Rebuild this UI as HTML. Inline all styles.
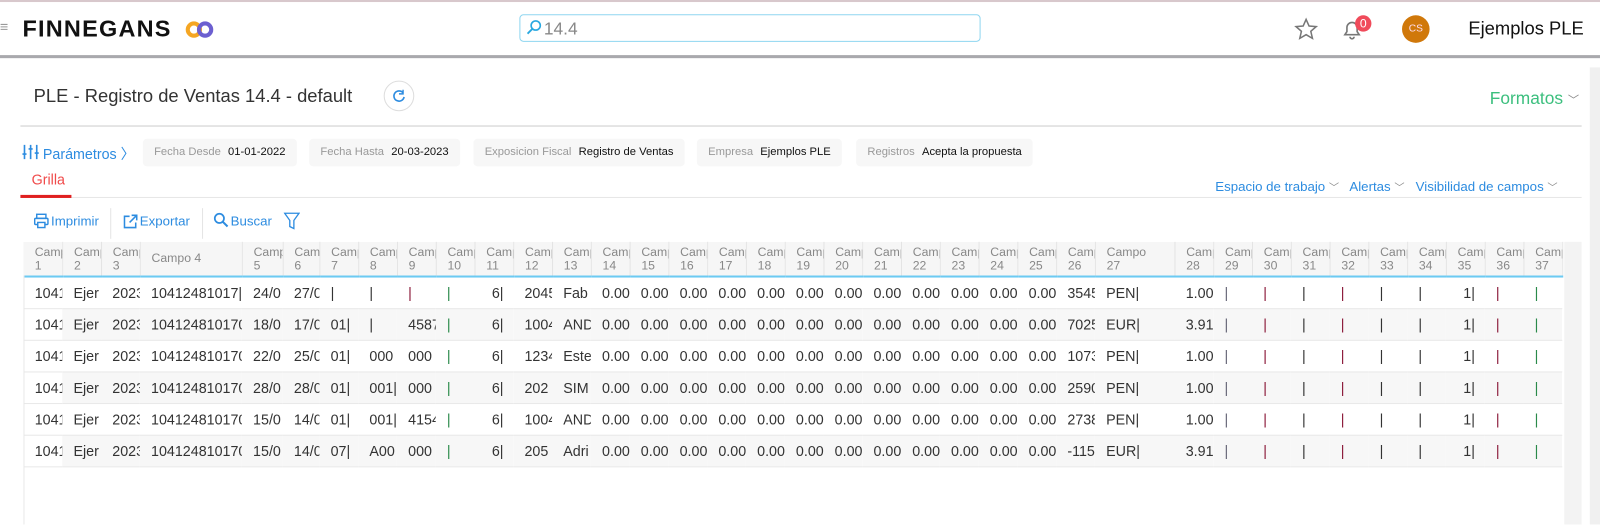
<!DOCTYPE html>
<html><head><meta charset="utf-8"><style>
*{box-sizing:border-box;margin:0;padding:0}
body{width:1600px;height:514px;overflow:hidden;background:#fff;font-family:"Liberation Sans",sans-serif;color:#333}
#w{position:absolute;left:0;top:0;width:1568px;height:504px;transform:scale(1.0204);transform-origin:0 0}
.a{position:absolute;white-space:nowrap}
.top{position:absolute;left:0;top:0;width:1568px;height:57px;border-top:2px solid #d8c8cc;border-bottom:3px solid #a9a9ad;background:#fff}
.chip{position:absolute;top:136px;height:27px;background:#f7f7f7;border-radius:4px;font-size:11px;line-height:27px;padding:0 11px;color:#999}
.chip b{font-weight:normal;color:#111;margin-left:4px}
table{position:absolute;left:23px;top:237px;border-collapse:collapse;table-layout:fixed;width:1508px;font-size:14px}
td,th{overflow:hidden;white-space:nowrap;padding-left:11px}
th{height:34px;background:#f6f6f6;font-weight:normal;color:#888;font-size:12px;text-align:left;line-height:13px;border-right:1px solid #e4e4e4;border-bottom:2px solid #6ccaf2;vertical-align:middle}
td{height:31px;border-bottom:1px solid #e8e8e8;color:#333}
tr:nth-child(odd) td{background:#f7f7f7}
tr:nth-child(odd) td:first-child{background:#fff}
.r{color:#8b1a3a}.g{color:#2a8a4a}.k{color:#667}
.blue{color:#2d8ce0}
</style></head><body><div id="w">
<div class="top"></div>
<div class="a" style="left:0;top:18px;font-size:14px;color:#999">≡</div>
<div class="a" style="left:22px;top:15px;font-size:23px;font-weight:bold;color:#111;letter-spacing:1.2px">FINNEGANS</div>
<svg class="a" style="left:181px;top:19px" width="30" height="20"><circle cx="9" cy="10" r="6" fill="none" stroke="#f5a623" stroke-width="4"/><circle cx="20" cy="10" r="6" fill="none" stroke="#6c5fd0" stroke-width="4"/></svg>
<div class="a" style="left:509px;top:14px;width:452px;height:27px;border:1px solid #8fd6f0;border-radius:4px"></div>
<svg class="a" style="left:515px;top:19px" width="16" height="16"><circle cx="10" cy="6" r="4.5" fill="none" stroke="#29a8e0" stroke-width="1.6"/><path d="M7 9L2 14" stroke="#29a8e0" stroke-width="1.8"/></svg>
<div class="a" style="left:533px;top:19px;font-size:17px;color:#888">14.4</div>
<svg class="a" style="left:1268px;top:17px" width="24" height="24"><path d="M12 2l2.9 6.5 7 .6-5.3 4.6 1.6 6.9L12 17l-6.2 3.6 1.6-6.9L2.1 9.1l7-.6z" fill="none" stroke="#777" stroke-width="1.5"/></svg>
<svg class="a" style="left:1314px;top:18px" width="22" height="22"><path d="M4 16h14l-2-3V9a5 5 0 0 0-10 0v4z M9 18a2 2 0 0 0 4 0" fill="none" stroke="#777" stroke-width="1.6"/></svg>
<div class="a" style="left:1328px;top:15px;width:16px;height:16px;border-radius:8px;background:#f04a5a;color:#fff;font-size:12px;text-align:center;line-height:16px">0</div>
<div class="a" style="left:1374px;top:15px;width:27px;height:27px;border-radius:14px;background:#d0780a;color:#fde;font-size:10px;text-align:center;line-height:27px">CS</div>
<div class="a" style="left:1439px;top:18px;font-size:18px;color:#111">Ejemplos PLE</div>
<div class="a" style="left:1558px;top:66px;width:10px;height:448px;background:#f0f0f0"></div>
<div class="a" style="left:33px;top:84px;font-size:18px;color:#333">PLE - Registro de Ventas 14.4 - default</div>
<div class="a" style="left:376px;top:79px;width:30px;height:30px;border:1px solid #ddd;border-radius:15px"></div>
<svg class="a" style="left:384px;top:87px" width="14" height="14"><path d="M11 4A5 5 0 1 0 12 8" fill="none" stroke="#2d8ce0" stroke-width="1.6"/><path d="M11 1v4H7" fill="none" stroke="#2d8ce0" stroke-width="1.4"/></svg>
<div class="a" style="left:1460px;top:87px;font-size:17px;color:#3cbf7e">Formatos <span style="font-size:11px;color:#888">﹀</span></div>
<div class="a" style="left:20px;top:123px;width:1530px;height:1px;background:#ccc"></div>
<svg class="a" style="left:21px;top:141px" width="18" height="16"><path d="M3 1v14M9 1v14M15 1v14" stroke="#2d8ce0" stroke-width="1.6"/><path d="M1 10h4M7 5h4M13 9h4" stroke="#2d8ce0" stroke-width="1.6"/></svg>
<div class="a blue" style="left:42px;top:141px;font-size:14px">Parámetros 〉</div>
<div class="chip" style="left:140px">Fecha Desde <b>01-01-2022</b></div>
<div class="chip" style="left:303px">Fecha Hasta <b>20-03-2023</b></div>
<div class="chip" style="left:464px">Exposicion Fiscal <b>Registro de Ventas</b></div>
<div class="chip" style="left:683px">Empresa <b>Ejemplos PLE</b></div>
<div class="chip" style="left:839px">Registros <b>Acepta la propuesta</b></div>
<div class="a" style="left:31px;top:168px;font-size:14px;color:#f04a4a">Grilla</div>
<div class="a" style="left:20px;top:193px;width:1530px;height:1px;background:#e6e6e6"></div>
<div class="a" style="left:20px;top:191px;width:50px;height:3px;background:#e02020"></div>
<div class="a blue" style="left:1191px;top:175px;font-size:13px">Espacio de trabajo <span style="color:#888;font-size:10px">﹀</span> &nbsp; Alertas <span style="color:#888;font-size:10px">﹀</span> &nbsp; Visibilidad de campos <span style="color:#888;font-size:10px">﹀</span></div>
<svg class="a" style="left:33px;top:209px" width="15" height="15"><rect x="3" y="1" width="9" height="4" fill="none" stroke="#2d8ce0" stroke-width="1.4"/><rect x="1" y="5" width="13" height="6" rx="1" fill="none" stroke="#2d8ce0" stroke-width="1.4"/><rect x="4" y="9" width="7" height="5" fill="#fff" stroke="#2d8ce0" stroke-width="1.4"/></svg>
<div class="a blue" style="left:50px;top:209px;font-size:13px">Imprimir</div>
<div class="a" style="left:108px;top:204px;width:1px;height:30px;background:#e4e4e4"></div>
<svg class="a" style="left:120px;top:209px" width="16" height="16"><path d="M7 3H2v11h11V9" fill="none" stroke="#2d8ce0" stroke-width="1.5"/><path d="M7 9l7-7M9 2h5v5" fill="none" stroke="#2d8ce0" stroke-width="1.5"/></svg>
<div class="a blue" style="left:137px;top:209px;font-size:13px">Exportar</div>
<div class="a" style="left:198px;top:204px;width:1px;height:30px;background:#e4e4e4"></div>
<svg class="a" style="left:209px;top:208px" width="15" height="15"><circle cx="6" cy="6" r="4.5" fill="none" stroke="#2d8ce0" stroke-width="1.7"/><path d="M9.5 9.5L14 14" stroke="#2d8ce0" stroke-width="2"/></svg>
<div class="a blue" style="left:226px;top:209px;font-size:13px">Buscar</div>
<svg class="a" style="left:278px;top:207px" width="16" height="18"><path d="M1 2h14L10 9v8L6 15V9z" fill="none" stroke="#2d8ce0" stroke-width="1.3"/></svg>
<div class="a" style="left:1533px;top:237px;width:17px;height:277px;background:#f3f3f3"></div>
<table>
<colgroup><col style="width:38px"><col style="width:38px"><col style="width:38px"><col style="width:100px"><col style="width:40px"><col style="width:36px"><col style="width:38px"><col style="width:38px"><col style="width:38px"><col style="width:38px"><col style="width:38px"><col style="width:38px"><col style="width:38px"><col style="width:38px"><col style="width:38px"><col style="width:38px"><col style="width:38px"><col style="width:38px"><col style="width:38px"><col style="width:38px"><col style="width:38px"><col style="width:38px"><col style="width:38px"><col style="width:38px"><col style="width:38px"><col style="width:38px"><col style="width:78px"><col style="width:38px"><col style="width:38px"><col style="width:38px"><col style="width:38px"><col style="width:38px"><col style="width:38px"><col style="width:38px"><col style="width:38px"><col style="width:38px"><col style="width:38px"></colgroup>
<tr><th>Campo<br>1</th><th>Campo<br>2</th><th>Campo<br>3</th><th>Campo 4</th><th>Campo<br>5</th><th>Campo<br>6</th><th>Campo<br>7</th><th>Campo<br>8</th><th>Campo<br>9</th><th>Campo<br>10</th><th>Campo<br>11</th><th>Campo<br>12</th><th>Campo<br>13</th><th>Campo<br>14</th><th>Campo<br>15</th><th>Campo<br>16</th><th>Campo<br>17</th><th>Campo<br>18</th><th>Campo<br>19</th><th>Campo<br>20</th><th>Campo<br>21</th><th>Campo<br>22</th><th>Campo<br>23</th><th>Campo<br>24</th><th>Campo<br>25</th><th>Campo<br>26</th><th>Campo<br>27</th><th>Campo<br>28</th><th>Campo<br>29</th><th>Campo<br>30</th><th>Campo<br>31</th><th>Campo<br>32</th><th>Campo<br>33</th><th>Campo<br>34</th><th>Campo<br>35</th><th>Campo<br>36</th><th>Campo<br>37</th></tr>
<tr><td>1041</td><td>Ejer</td><td>2023</td><td>10412481017|</td><td>24/0</td><td>27/0</td><td>|</td><td>|</td><td class="r">|</td><td class="g">|</td><td style="padding-left:17px">6|</td><td>2045</td><td>Fab</td><td>0.00</td><td>0.00</td><td>0.00</td><td>0.00</td><td>0.00</td><td>0.00</td><td>0.00</td><td>0.00</td><td>0.00</td><td>0.00</td><td>0.00</td><td>0.00</td><td>3545</td><td>PEN|</td><td>1.00</td><td class="k">|</td><td class="r">|</td><td>|</td><td class="r">|</td><td>|</td><td>|</td><td style="padding-left:17px">1|</td><td class="r">|</td><td class="g">|</td></tr>
<tr><td>1041</td><td>Ejer</td><td>2023</td><td>10412481017000</td><td>18/0</td><td>17/0</td><td>01|</td><td>|</td><td>4587</td><td class="g">|</td><td style="padding-left:17px">6|</td><td>1004</td><td>AND</td><td>0.00</td><td>0.00</td><td>0.00</td><td>0.00</td><td>0.00</td><td>0.00</td><td>0.00</td><td>0.00</td><td>0.00</td><td>0.00</td><td>0.00</td><td>0.00</td><td>7025</td><td>EUR|</td><td>3.910</td><td class="k">|</td><td class="r">|</td><td>|</td><td class="r">|</td><td>|</td><td>|</td><td style="padding-left:17px">1|</td><td class="r">|</td><td class="g">|</td></tr>
<tr><td>1041</td><td>Ejer</td><td>2023</td><td>10412481017000</td><td>22/0</td><td>25/0</td><td>01|</td><td>000</td><td>000</td><td class="g">|</td><td style="padding-left:17px">6|</td><td>1234</td><td>Este</td><td>0.00</td><td>0.00</td><td>0.00</td><td>0.00</td><td>0.00</td><td>0.00</td><td>0.00</td><td>0.00</td><td>0.00</td><td>0.00</td><td>0.00</td><td>0.00</td><td>1073</td><td>PEN|</td><td>1.00</td><td class="k">|</td><td class="r">|</td><td>|</td><td class="r">|</td><td>|</td><td>|</td><td style="padding-left:17px">1|</td><td class="r">|</td><td class="g">|</td></tr>
<tr><td>1041</td><td>Ejer</td><td>2023</td><td>10412481017000</td><td>28/0</td><td>28/0</td><td>01|</td><td>001|</td><td>000</td><td class="g">|</td><td style="padding-left:17px">6|</td><td>202</td><td>SIM</td><td>0.00</td><td>0.00</td><td>0.00</td><td>0.00</td><td>0.00</td><td>0.00</td><td>0.00</td><td>0.00</td><td>0.00</td><td>0.00</td><td>0.00</td><td>0.00</td><td>2590</td><td>PEN|</td><td>1.00</td><td class="k">|</td><td class="r">|</td><td>|</td><td class="r">|</td><td>|</td><td>|</td><td style="padding-left:17px">1|</td><td class="r">|</td><td class="g">|</td></tr>
<tr><td>1041</td><td>Ejer</td><td>2023</td><td>10412481017000</td><td>15/0</td><td>14/0</td><td>01|</td><td>001|</td><td>4154</td><td class="g">|</td><td style="padding-left:17px">6|</td><td>1004</td><td>AND</td><td>0.00</td><td>0.00</td><td>0.00</td><td>0.00</td><td>0.00</td><td>0.00</td><td>0.00</td><td>0.00</td><td>0.00</td><td>0.00</td><td>0.00</td><td>0.00</td><td>2738</td><td>PEN|</td><td>1.00</td><td class="k">|</td><td class="r">|</td><td>|</td><td class="r">|</td><td>|</td><td>|</td><td style="padding-left:17px">1|</td><td class="r">|</td><td class="g">|</td></tr>
<tr><td>1041</td><td>Ejer</td><td>2023</td><td>10412481017000</td><td>15/0</td><td>14/0</td><td>07|</td><td>A00</td><td>000</td><td class="g">|</td><td style="padding-left:17px">6|</td><td>205</td><td>Adri</td><td>0.00</td><td>0.00</td><td>0.00</td><td>0.00</td><td>0.00</td><td>0.00</td><td>0.00</td><td>0.00</td><td>0.00</td><td>0.00</td><td>0.00</td><td>0.00</td><td>-115.</td><td>EUR|</td><td>3.910</td><td class="k">|</td><td class="r">|</td><td>|</td><td class="r">|</td><td>|</td><td>|</td><td style="padding-left:17px">1|</td><td class="r">|</td><td class="g">|</td></tr>
</table>
<div class="a" style="left:23px;top:270px;width:1px;height:244px;background:#e8e8e8"></div>
</div></body></html>
